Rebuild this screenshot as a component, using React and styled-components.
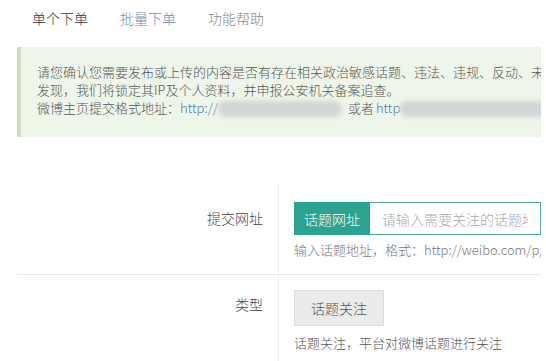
import styled, {createGlobalStyle} from 'styled-components';

const GlobalStyle = createGlobalStyle`
  html, body {
    margin: 0;
    padding: 0;
    background: #fff;
  }
  body {
    font-family: "Noto Sans CJK SC", "Liberation Sans", sans-serif;
    font-weight: 300;
    color: #555;
  }
`;

const tabs = [
  {label: '单个下单', kind: 'active'},
  {label: '批量下单', kind: 'link'},
  {label: '功能帮助', kind: 'muted'},
];

const tabColors = {
  active: '#333',
  link: '#6f8db0',
  muted: '#888',
};

function App() {
  return (
    <>
      <GlobalStyle />
      <Page>
        <Tabs>
          {tabs.map((t) => (
            <Tab key={t.label} $kind={t.kind}>
              {t.label}
            </Tab>
          ))}
        </Tabs>

        <Notice>
          <NoticeLine>
            请您确认您需要发布或上传的内容是否有存在相关政治敏感话题、违法、违规、反动、未成年人不宜等内容，一经
          </NoticeLine>
          <NoticeLine>发现，我们将锁定其IP及个人资料，并申报公安机关备案追查。</NoticeLine>
          <NoticeLine>
            微博主页提交格式地址：<Link>http://</Link>
            <Blur $w={124} />
            <Gap>或者</Gap>
            <Link>http</Link>
            <Blur $w={150} />
          </NoticeLine>
        </Notice>

        <Form>
          <Row>
            <Label $top={19} $lh={33}>
              提交网址
            </Label>
            <Field $top={19} $bottom={14}>
              <InputGroup>
                <Addon>话题网址</Addon>
                <Input placeholder="请输入需要关注的话题地址" />
              </InputGroup>
              <Help $gap={5} $color="#777">
                输入话题地址，格式：http://weibo.com/p/100808xxxxxxxxxxxx
              </Help>
            </Field>
          </Row>
          <Row $last>
            <Label $top={12} $lh={34}>
              类型
            </Label>
            <Field $top={15} $bottom={10}>
              <TypeButton type="button">话题关注</TypeButton>
              <Help $gap={7} $color="#555">
                话题关注，平台对微博话题进行关注
              </Help>
            </Field>
          </Row>
        </Form>
      </Page>
    </>
  );
}

const Page = styled.div`
  width: 524px;
  margin-left: 17px;
  overflow: hidden;
`;

const Tabs = styled.div`
  display: flex;
  gap: 32px;
  height: 47px;
  padding: 9px 0 0 15px;
  box-sizing: border-box;
`;

const Tab = styled.span`
  font-size: 14px;
  line-height: 18px;
  color: ${({$kind}) => tabColors[$kind]};
  cursor: pointer;
`;

const Notice = styled.div`
  height: 90px;
  box-sizing: border-box;
  padding: 16px 0 0 16px;
  background: #eef5e9;
  border-left: 4px solid #d3dcc4;
  font-size: 13px;
  line-height: 18px;
  color: #555;
`;

const NoticeLine = styled.div`
  white-space: nowrap;
  display: flex;
  align-items: center;
  height: 18px;
`;

const Link = styled.span`
  color: #4e7aa6;
`;

const Gap = styled.span`
  margin: 0 2px 0 6px;
`;

const Blur = styled.span`
  display: inline-block;
  flex: none;
  width: ${({$w}) => $w}px;
  height: 16px;
  margin-top: 2px;
  border-radius: 8px;
  background: #d2d7d3;
  filter: blur(2px);
`;

const Form = styled.div`
  margin-top: 46px;
`;

const Row = styled.div`
  display: grid;
  grid-template-columns: 262px 1fr;
  border-bottom: ${({$last}) => ($last ? 'none' : '1px solid #e8e8e8')};
`;

const Label = styled.div`
  border-right: 1px solid #eeeeee;
  padding: ${({$top}) => $top}px 15px 0 0;
  text-align: right;
  font-size: 14px;
  line-height: ${({$lh}) => $lh}px;
  color: #444;
`;

const Field = styled.div`
  padding: ${({$top}) => $top}px 0 ${({$bottom}) => $bottom}px 15px;
  min-width: 0;
`;

const InputGroup = styled.div`
  display: flex;
  height: 33px;
`;

const Addon = styled.span`
  flex: none;
  width: 76px;
  display: flex;
  align-items: center;
  justify-content: center;
  background: #2aa391;
  color: #fff;
  font-size: 14px;
`;

const Input = styled.input`
  flex: 1;
  min-width: 0;
  border: 1px solid #56ad9f;
  border-left: none;
  padding: 0 12px;
  font-family: inherit;
  font-weight: 300;
  font-size: 14px;
  outline: none;
  &::placeholder {
    color: #aaa;
  }
`;

const Help = styled.div`
  margin-top: ${({$gap}) => $gap}px;
  font-size: 13px;
  line-height: 20px;
  color: ${({$color}) => $color};
  white-space: nowrap;
  overflow: hidden;
`;

const TypeButton = styled.button`
  height: 36px;
  padding: 0 16px;
  border: 1px solid #dddddd;
  background: #ebebeb;
  color: #555;
  font-family: inherit;
  font-weight: 300;
  font-size: 14px;
`;

export default App;
